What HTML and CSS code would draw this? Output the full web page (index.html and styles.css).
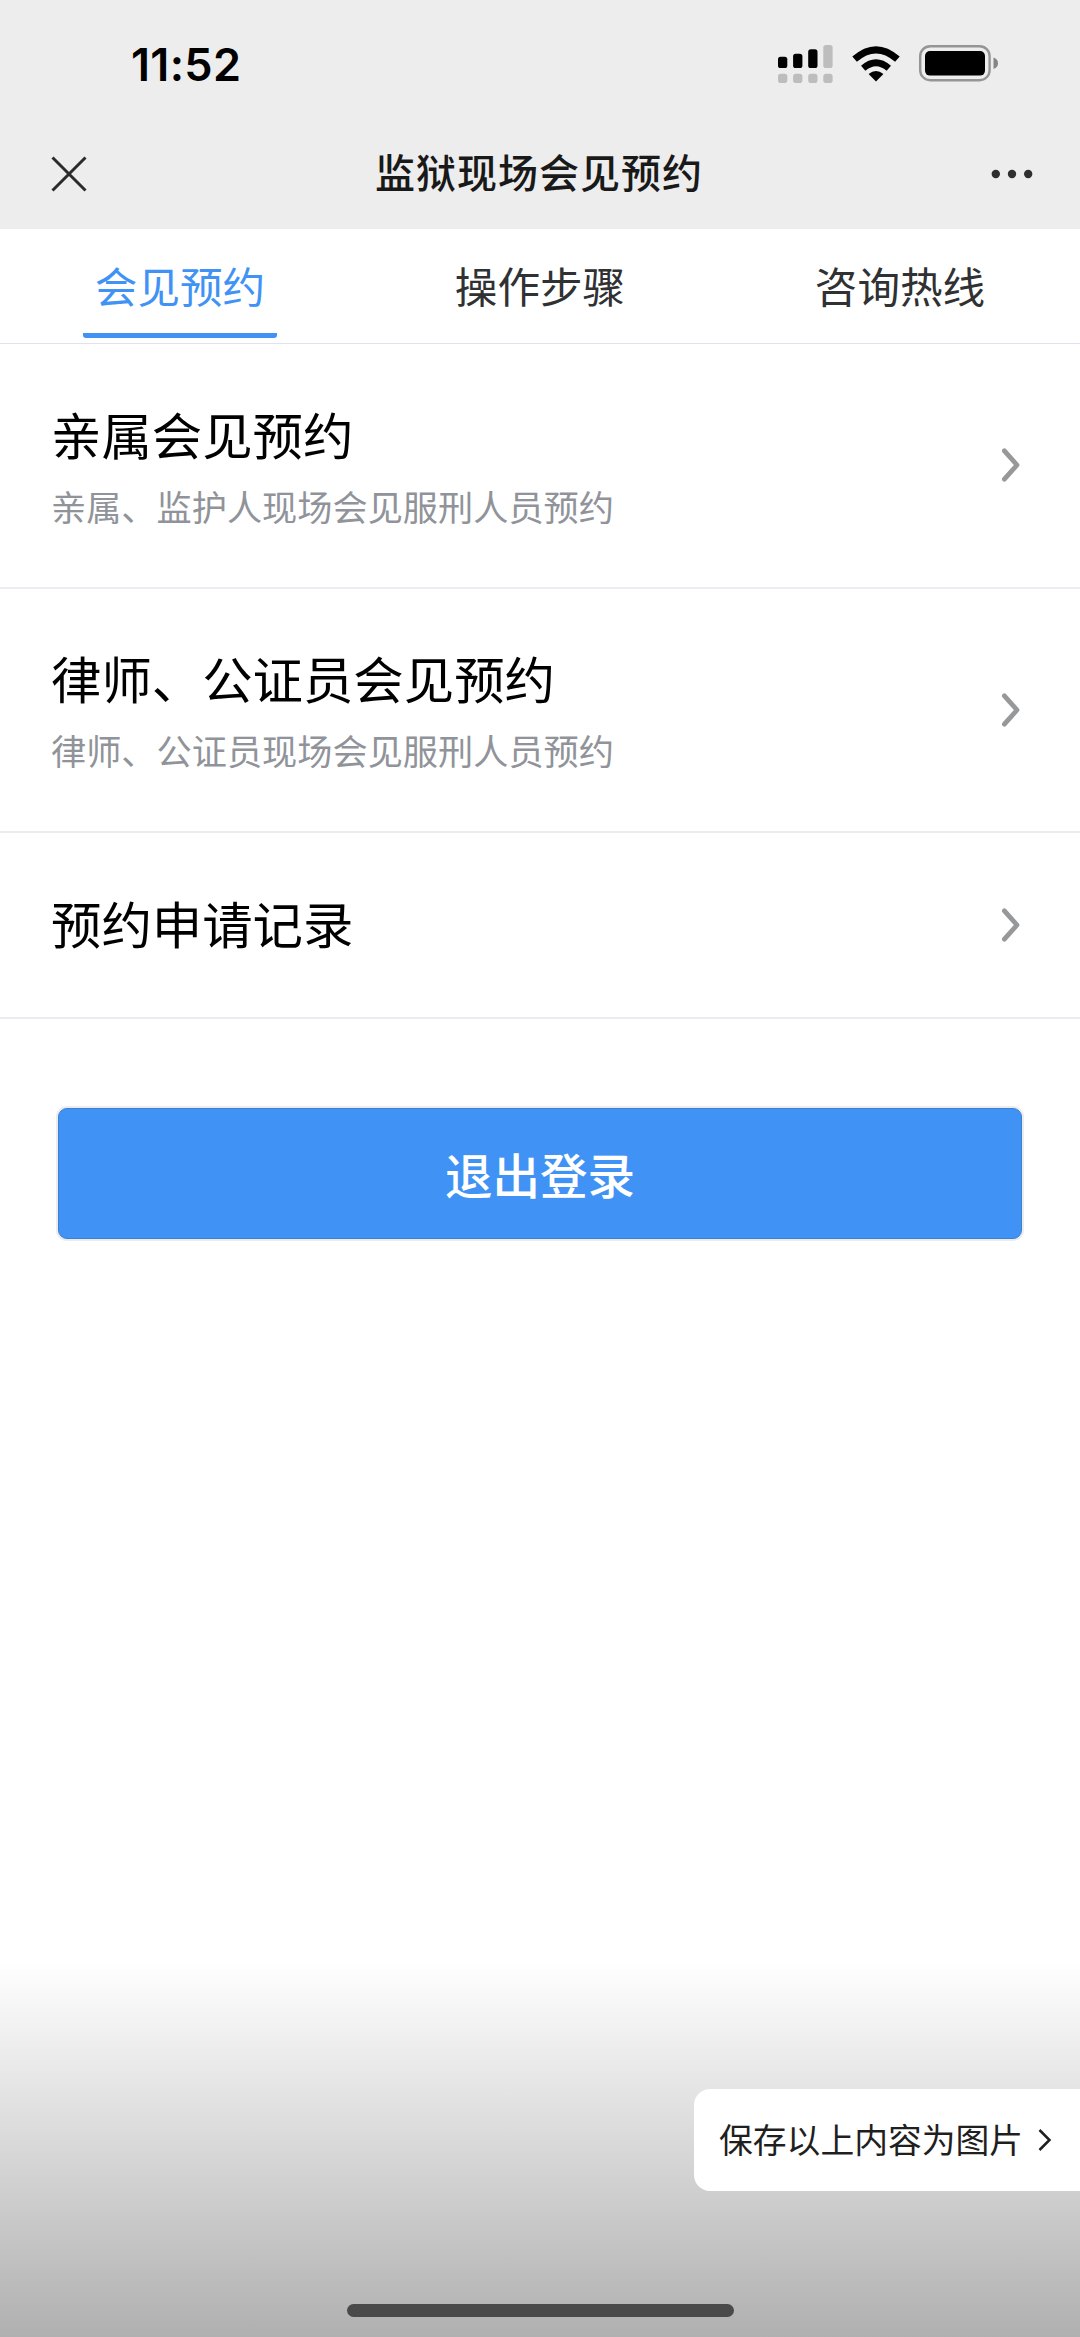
FILE: index.html
```html
<!DOCTYPE html>
<html lang="zh-CN">
<head>
    <meta charset="UTF-8">
    <meta name="viewport" content="width=device-width, initial-scale=1.0">
    <title>监狱现场会见预约</title>
    <link rel="stylesheet" href="styles.css">
</head>
<body>
    <div class="header">
        <div class="status-bar">
            <span class="time">11:52</span>
            <div class="status-icons">
                <svg class="signal" width="55" height="38" viewBox="0 0 55 38">
                    <rect x="0" y="11.7" width="9.3" height="11.3" rx="2.6"/>
                    <rect x="15.1" y="8.7" width="9.3" height="14.3" rx="2.6"/>
                    <rect x="30.2" y="4.3" width="9.3" height="18.7" rx="2.6"/>
                    <g fill="#bdbdbd">
                        <rect x="45.3" y="0" width="9.3" height="23" rx="2.6"/>
                        <rect x="0" y="28.7" width="9.3" height="9.3" rx="2.8"/>
                        <rect x="15.1" y="28.7" width="9.3" height="9.3" rx="2.8"/>
                        <rect x="30.2" y="28.7" width="9.3" height="9.3" rx="2.8"/>
                        <rect x="45.3" y="28.7" width="9.3" height="9.3" rx="2.8"/>
                    </g>
                </svg>
                <svg class="wifi" width="48" height="36" viewBox="0 0 48 36">
                    <path d="M24 35.5 L16.6 28 Q24 21.8 31.4 28 Z"/>
                    <path d="M11.2 22.3 Q24 11.3 36.8 22.3" fill="none" stroke="#000" stroke-width="6.6"/>
                    <path d="M2.6 13.2 Q24 -5.6 45.4 13.2" fill="none" stroke="#000" stroke-width="7"/>
                </svg>
                <svg class="battery" width="79" height="37" viewBox="0 0 79 37">
                    <rect x="1.2" y="1.2" width="69.4" height="34" rx="10" fill="none" stroke="#959595" stroke-width="2.4"/>
                    <rect x="6" y="6" width="60" height="24.6" rx="5"/>
                    <path d="M74.5 12.5 Q79 14 79 18.2 Q79 22.4 74.5 24 Z" fill="#858585"/>
                </svg>
            </div>
        </div>
        <div class="nav-bar">
            <svg width="36" height="36" viewBox="0 0 36 36">
                <path d="M1.5 1.5 L34.5 34.5 M34.5 1.5 L1.5 34.5" stroke="#2b2b2b" stroke-width="3" fill="none"/>
            </svg>
            <h1>监狱现场会见预约</h1>
            <svg width="42" height="10" viewBox="0 0 42 10" fill="#2f2f2f">
                <circle cx="4.8" cy="5" r="4.2"/>
                <circle cx="21" cy="5" r="4.2"/>
                <circle cx="37.2" cy="5" r="4.2"/>
            </svg>
        </div>
    </div>

    <div class="tabs">
        <div class="tab active"><span>会见预约</span></div>
        <div class="tab"><span>操作步骤</span></div>
        <div class="tab"><span>咨询热线</span></div>
    </div>

    <div class="list">
        <div class="item">
            <div class="text">
                <h2>亲属会见预约</h2>
                <p>亲属、监护人现场会见服刑人员预约</p>
            </div>
            <svg width="18" height="34" viewBox="0 0 18 34"><path class="chevron" d="M2.4 2.8 L15 17 L2.4 31.2"/></svg>
        </div>
        <div class="item">
            <div class="text">
                <h2>律师、公证员会见预约</h2>
                <p>律师、公证员现场会见服刑人员预约</p>
            </div>
            <svg width="18" height="34" viewBox="0 0 18 34"><path class="chevron" d="M2.4 2.8 L15 17 L2.4 31.2"/></svg>
        </div>
        <div class="item single">
            <h2>预约申请记录</h2>
            <svg width="18" height="34" viewBox="0 0 18 34"><path class="chevron" d="M2.4 2.8 L15 17 L2.4 31.2"/></svg>
        </div>
    </div>

    <button class="logout">退出登录</button>

    <div class="bottom-shade">
        <div class="save-tip">
            <span>保存以上内容为图片</span>
            <svg width="14" height="24" viewBox="0 0 14 24"><path d="M1.5 2 L11.5 12 L1.5 22" fill="none" stroke="#1f1f1f" stroke-width="2.5"/></svg>
        </div>
        <div class="home-indicator"></div>
    </div>
</body>
</html>
```
FILE: styles.css
```css
* {
    box-sizing: border-box;
}

body {
    font-family: 'Noto Sans CJK SC', sans-serif;
    background-color: white;
    margin: 0;
    height: 2337px;
    display: flex;
    flex-direction: column;
    overflow: hidden;
}

h1, h2, p {
    margin: 0;
    font-weight: 400;
}

svg {
    display: block;
    flex-shrink: 0;
}

.header {
    height: 229px;
    background-color: #ededed;
}

.status-bar {
    height: 127px;
    padding: 0 82px 0 131px;
    display: flex;
    align-items: center;
    justify-content: space-between;
}

.time {
    font-family: Inter, sans-serif;
    font-size: 45px;
    font-weight: 600;
    letter-spacing: 0.3px;
    padding-top: 2px;
    color: black;
}

.status-icons {
    display: flex;
    align-items: center;
    gap: 19px;
}

.nav-bar {
    height: 93px;
    padding: 0 47px 0 51px;
    display: flex;
    align-items: center;
    justify-content: space-between;
}

.nav-bar h1 {
    font-size: 40px;
    font-weight: 500;
    letter-spacing: 1px;
    padding-bottom: 6px;
    color: #191919;
}

.tabs {
    height: 115px;
    display: flex;
    border-bottom: 1px solid #dfe3ec;
}

.tab {
    flex: 1;
    display: flex;
    justify-content: center;
    font-size: 42.6px;
    line-height: 112px;
    color: #303133;
}

.tab span {
    height: 109px;
    padding: 0 12px;
}

.tab.active span {
    color: #4093f4;
    border-radius: 0 0 3px 3px;
    background: linear-gradient(#4093f4, #4093f4) bottom / 100% 5px no-repeat;
}

.item {
    height: 244.6px;
    padding: 0 60px 0 51px;
    display: flex;
    align-items: center;
    justify-content: space-between;
    border-bottom: 2px solid #ebecf2;
}

.item .text {
    padding-top: 9px;
}

.item h2 {
    font-size: 50.4px;
    line-height: 72px;
    color: black;
}

.item p {
    font-size: 35.2px;
    line-height: 72px;
    color: #909399;
}

.item.single {
    height: 186px;
}

.single h2 {
    padding-bottom: 4px;
}

.chevron {
    fill: none;
    stroke: #97989a;
    stroke-width: 4.8;
    stroke-linecap: round;
    stroke-linejoin: round;
}

.logout {
    height: 131px;
    margin: 88.8px 58px 0;
    border: 1.5px solid #3a80d4;
    border-radius: 9px;
    box-shadow: 0 0 0 2px #ececee;
    background-color: #4093f4;
    color: white;
    font-family: inherit;
    font-size: 47.5px;
    font-weight: 500;
}

.bottom-shade {
    height: 374px;
    margin-top: auto;
    display: flex;
    flex-direction: column;
    justify-content: space-between;
    padding: 126px 0 20px;
    background: linear-gradient(#fff, #b0b0b0);
}

.save-tip {
    align-self: flex-end;
    width: 386px;
    height: 102px;
    padding: 0 28px 0 25px;
    display: flex;
    align-items: center;
    justify-content: space-between;
    border-radius: 16px 0 0 16px;
    background-color: white;
    color: #1f1f1f;
    font-size: 33.8px;
}

.save-tip span {
    padding-bottom: 4px;
}

.home-indicator {
    align-self: center;
    width: 387px;
    height: 13px;
    border-radius: 7px;
    background-color: #4a4a4a;
}
```
